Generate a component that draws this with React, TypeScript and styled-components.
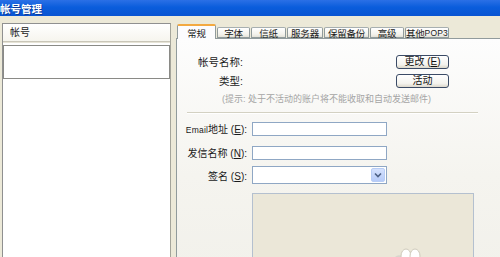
import React from "react";
import styled, { createGlobalStyle } from "styled-components";

const GlobalStyle = createGlobalStyle`
  html, body {
    margin: 0;
    padding: 0;
    overflow: hidden;
    background: #ece9d8;
  }
  * {
    box-sizing: border-box;
  }
`;

const Window = styled.div`
  width: 500px;
  height: 257px;
  overflow: hidden;
  display: flex;
  flex-direction: column;
  background: #ece9d8;
  font-family: "Liberation Sans", "Noto Sans CJK SC", sans-serif;
  font-size: 10px;
  color: #1a1a1a;
`;

const TitleBar = styled.div`
  height: 16px;
  flex: none;
  display: flex;
  align-items: center;
  background: linear-gradient(#2b70e6, #0a5ddc 45%, #0954d2);
  color: #fff;
  font-weight: bold;
  font-size: 10.5px;
  text-shadow: 1px 1px 0 #0a3a9a;
`;

const Body = styled.div`
  flex: 1;
  display: flex;
  align-items: flex-start;
  gap: 5px;
  padding: 7px 0 0 2px;
`;

const AccountList = styled.div`
  width: 169px;
  height: 260px;
  flex: none;
  display: flex;
  flex-direction: column;
  background: #fff;
  border: 1px solid #8f9090;
  border-right-color: #a4a49a;
`;

const ListHeader = styled.div`
  height: 18px;
  line-height: 17px;
  padding-left: 7px;
  background: linear-gradient(#fff, #f6f5ee);
  border-bottom: 1px solid #c9c6b8;
  box-shadow: 0 1px 0 #e6e3d6;
`;

const ListItem = styled.div`
  margin-top: 3px;
  height: 34px;
  border: 1px solid #8a8a86;
`;

const TabArea = styled.div`
  flex: none;
  width: 340px;
  margin-top: 1px;
  display: flex;
  flex-direction: column;
`;

const TabStrip = styled.div`
  height: 14px;
  display: flex;
  align-items: flex-end;
  gap: 1px;
  padding-left: 1px;
  position: relative;
  z-index: 1;
`;

const Tab = styled.div<{ $w: number; $active?: boolean }>`
  width: ${(p) => p.$w}px;
  height: ${(p) => (p.$active ? 15 : 11)}px;
  margin-bottom: ${(p) => (p.$active ? -1 : 0)}px;
  display: flex;
  align-items: center;
  justify-content: center;
  font-size: 9.5px;
  white-space: nowrap;
  letter-spacing: -0.2px;
  border: 1px solid #919b9c;
  border-bottom: ${(p) => (p.$active ? "none" : "1px solid #919b9c")};
  border-top: ${(p) => (p.$active ? "2px solid #f3a940" : "1px solid #a7afb0")};
  border-radius: 2px 2px 0 0;
  background: ${(p) =>
    p.$active ? "#fcfcfe" : "linear-gradient(#fff, #f3f2ec 70%, #e4e2d8)"};
`;

const TabPanel = styled.div`
  height: 230px;
  border: 1px solid #919b9c;
  background: linear-gradient(#fdfdfd, #f5f4ef 60%, #f2f1eb);
  display: flex;
  flex-direction: column;
`;

const TopGrid = styled.div`
  margin-top: 16px;
  display: grid;
  grid-template-columns: 66px 153px 53px;
  grid-auto-rows: 14px;
  row-gap: 5px;
  align-items: center;
`;

const TopLabel = styled.div`
  justify-self: end;
  white-space: nowrap;
  font-size: 10.5px;
  line-height: 14px;
`;

const Button = styled.button`
  height: 14px;
  width: 53px;
  padding: 0;
  font-family: inherit;
  font-size: 10px;
  line-height: 12px;
  color: #111;
  border: 1px solid #3b4b66;
  border-radius: 3px;
  background: linear-gradient(#fff, #f4f3ee 70%, #dcd8cb);
`;

const Hint = styled.div`
  margin: 6px 0 0 45px;
  font-size: 9px;
  line-height: 11px;
  color: #a5a5a5;
  white-space: nowrap;
`;

const Separator = styled.div`
  margin: 7px 0 0 10px;
  width: 291px;
  height: 2px;
  border-top: 1px solid #d3d1c2;
  border-bottom: 1px solid #fff;
`;

const FormGrid = styled.div`
  margin-top: 7px;
  display: grid;
  grid-template-columns: 70px 135px;
  column-gap: 5px;
  align-items: center;
`;

const FormLabel = styled.div<{ $gap: number }>`
  justify-self: end;
  margin-top: ${(p) => p.$gap}px;
  white-space: nowrap;
`;

const Latin = styled.span`
  font-size: 8.5px;
  letter-spacing: 0.2px;
`;

const TextInput = styled.div<{ $gap: number }>`
  height: 14px;
  margin-top: ${(p) => p.$gap}px;
  background: #fff;
  border: 1px solid #8fa7c4;
`;

const Select = styled.div`
  height: 18px;
  margin-top: 6px;
  display: flex;
  justify-content: flex-end;
  align-items: stretch;
  padding: 1px;
  background: #fff;
  border: 1px solid #8fa7c4;
`;

const SelectButton = styled.div`
  width: 14px;
  display: flex;
  align-items: center;
  justify-content: center;
  border: 1px solid #b8cdf5;
  border-radius: 2px;
  background: linear-gradient(#d4e1fd, #b6cbf8);
`;

const Preview = styled.div`
  position: relative;
  margin: 9px 0 0 75px;
  width: 222px;
  height: 70px;
  background: #ebe7d8;
  border: 1px solid #b4c0cf;
`;

const Mascot = styled.svg`
  position: absolute;
  left: 142px;
  top: 54px;
`;

const Acc = ({ k }: { k: string }) => (
  <>
    (<u>{k}</u>)
  </>
);

const tabs = [
  { label: "常规", w: 39, active: true },
  { label: "字体", w: 33 },
  { label: "信纸", w: 35 },
  { label: "服务器", w: 36 },
  { label: "保留备份", w: 45 },
  { label: "高级", w: 34 },
  { label: "其他POP3", w: 44 },
];

const App: React.FC = () => {
  return (
    <Window>
      <GlobalStyle />
      <TitleBar>帐号管理</TitleBar>
      <Body>
        <AccountList>
          <ListHeader>帐号</ListHeader>
          <ListItem />
        </AccountList>
        <TabArea>
          <TabStrip>
            {tabs.map((t) => (
              <Tab key={t.label} $w={t.w} $active={t.active}>
                {t.label.replace("POP3", "")}
                {t.label.includes("POP3") && <Latin>POP3</Latin>}
              </Tab>
            ))}
          </TabStrip>
          <TabPanel>
            <TopGrid>
              <TopLabel>帐号名称:</TopLabel>
              <div />
              <Button>
                更改 <Acc k="E" />
              </Button>
              <TopLabel>类型:</TopLabel>
              <div />
              <Button>活动</Button>
            </TopGrid>
            <Hint>(提示: 处于不活动的账户将不能收取和自动发送邮件)</Hint>
            <Separator />
            <FormGrid>
              <FormLabel $gap={0}>
                <Latin>Email</Latin>地址 <Acc k="E" />:
              </FormLabel>
              <TextInput $gap={0} />
              <FormLabel $gap={9}>
                发信名称 <Acc k="N" />:
              </FormLabel>
              <TextInput $gap={9} />
              <FormLabel $gap={6}>
                签名 <Acc k="S" />:
              </FormLabel>
              <Select>
                <SelectButton>
                  <svg width="8" height="6" viewBox="0 0 8 6">
                    <path d="M1 1.5 L4 4.5 L7 1.5" fill="none" stroke="#4d6185" strokeWidth="1.6" />
                  </svg>
                </SelectButton>
              </Select>
            </FormGrid>
            <Preview>
              <Mascot width="30" height="14" viewBox="0 0 30 14">
                <path d="M0 9 Q3 6 7 8 L7 14 L0 14 Z" fill="#d8d6cc" />
                <ellipse cx="11" cy="8" rx="5" ry="7" fill="#fff" stroke="#cfcabb" />
                <ellipse cx="20" cy="8" rx="5" ry="7" fill="#fff" stroke="#cfcabb" />
              </Mascot>
            </Preview>
          </TabPanel>
        </TabArea>
      </Body>
    </Window>
  );
};

export default App;
